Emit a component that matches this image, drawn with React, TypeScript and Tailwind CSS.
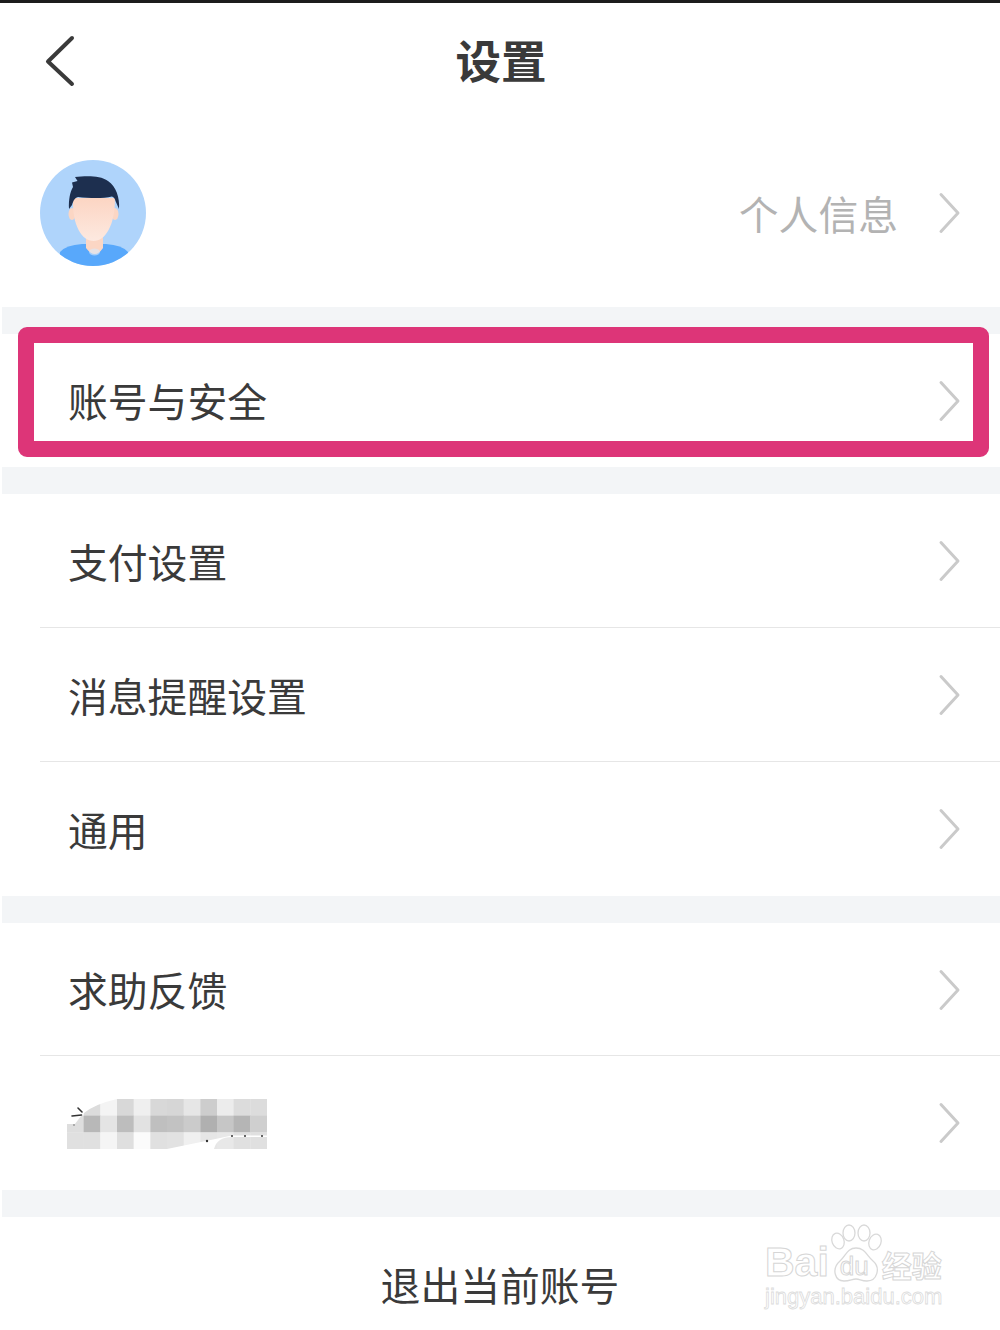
const cjk = "font-['Noto_Sans_CJK_SC','Noto_Sans',sans-serif]";

// ───── icons ─────

function Chevron() {
  return (
    <svg width="24" height="44" viewBox="0 0 24 44" fill="none" className="shrink-0">
      <path d="M4 3.5 L21 22 L4 40.5" stroke="#cacaca" strokeWidth="3" strokeLinecap="round" strokeLinejoin="round" />
    </svg>
  );
}

function BackIcon() {
  return (
    <svg width="32" height="52" viewBox="0 0 32 52" fill="none">
      <path d="M28 3 L4 26.5 L28 49" stroke="#3a3a3a" strokeWidth="4" strokeLinecap="round" strokeLinejoin="round" />
    </svg>
  );
}

function Avatar() {
  return (
    <svg width="106" height="106" viewBox="0 0 106 106" className="shrink-0">
      <defs>
        <clipPath id="avatar-clip">
          <circle cx="53" cy="53" r="53" />
        </clipPath>
        <linearGradient id="face" x1="0" y1="0" x2="0" y2="1">
          <stop offset="0" stopColor="#fcd5c3" />
          <stop offset="1" stopColor="#fde9e0" />
        </linearGradient>
      </defs>
      <g clipPath="url(#avatar-clip)">
        <rect width="106" height="106" fill="#afd4fb" />
        <path d="M19 106 L20 92 Q26 85 42 84 L66 84 Q82 85 88 92 L88 106 Z" fill="#58a8fb" />
        <path d="M46 72 H63 V88 Q55 100 46 88 Z" fill="#fbd6c4" />
        <ellipse cx="54.5" cy="92" rx="5.5" ry="3.5" fill="#d9eafb" opacity="0.6" />
        <ellipse cx="32" cy="54" rx="3.5" ry="6" fill="#fbd6c4" />
        <ellipse cx="75" cy="54" rx="3.5" ry="6" fill="#fbd6c4" />
        <path d="M33 38 C32 66 42 81 53.5 81 C65 81 75 66 75 38 Z" fill="url(#face)" />
        <path d="M29 49 C28.5 40 30 32 33 27 L32 22.5 L37.5 21 L35 17 C45 16 60 15 68 21 C76 26 80 38 79 49 L75.5 41 C75 39 74 37 72 36.5 C62 39 48 38 38 37 C34 38 33 42 32 45 Z" fill="#1d2f4f" />
      </g>
    </svg>
  );
}

// pixelated patch that covers the hidden label
const MOSAIC = [
  ["#ffffff", "#dcdcdc", "#f4f4f4", "#d8d8d8", "#efefef", "#d8d8d8", "#d6d6d6", "#e6e6e6", "#cdcdcd", "#ececec", "#dcdcdc", "#dcdcdc"],
  ["#dedede", "#b8b8b8", "#e4e4e4", "#bdbdbd", "#e2e2e2", "#bfbfbf", "#c2c2c2", "#cbcbcb", "#b0b0b0", "#c6c6c6", "#b5b5b5", "#cfcfcf"],
  ["#e0e0e0", "#e0e0e0", "#f5f5f5", "#dfdfdf", "#fbfbfb", "#e0e0e0", "#e2e2e2", "#f0f0f0", "#e6e6e6", "#e8e8e8", "#e0e0e0", "#e0e0e0"],
];

function Mosaic() {
  const size = 200 / 12;
  return (
    <svg width="200" height="50" viewBox="0 0 200 50" className="shrink-0">
      {MOSAIC.map((row, y) =>
        row.map((fill, x) => (
          <rect key={`${x}-${y}`} x={x * size} y={y * size} width={size + 0.3} height={size + 0.3} fill={fill} />
        )),
      )}
      <path d="M0 0 H50 Q28 5 17 14 Q12 19 8 25 H0 Z" fill="#ffffff" />
      <path d="M100 51 V50 L140 41.7 L165 36.5 H200 V38 H165 Q150 38 147 50 V51 Z" fill="#ffffff" />
      <path d="M11 9 L15 13 M5 17 L14.5 16" stroke="#333" strokeWidth="1.6" fill="none" strokeLinecap="round" />
      <circle cx="7" cy="26" r="0.7" fill="#555" />
      <circle cx="140" cy="42" r="1.2" fill="#333" />
      <circle cx="165" cy="37" r="1" fill="#333" />
      <circle cx="178" cy="37" r="1" fill="#333" />
      <circle cx="195" cy="37" r="1" fill="#333" />
    </svg>
  );
}

function Watermark() {
  const stroked = "text-white [-webkit-text-stroke:1px_#d6d6d6]";
  return (
    <div className="absolute right-[55px] top-[5px] flex w-[180px] flex-col items-start">
      <div className="flex h-[60px] items-end">
        <span className={`font-['Liberation_Sans',sans-serif] text-[41px] leading-[40px] font-bold ${stroked}`}>Bai</span>
        <div className="relative mb-[-2px] h-[60px] w-[54px] shrink-0">
          <svg width="54" height="60" viewBox="0 0 54 60" fill="#ffffff" stroke="#d9d9d9" strokeWidth="1.3" className="absolute inset-0">
            <ellipse cx="9" cy="17" rx="6" ry="8" transform="rotate(-20 9 17)" />
            <ellipse cx="20" cy="9" rx="6" ry="8" />
            <ellipse cx="35" cy="9" rx="6" ry="8" />
            <ellipse cx="46" cy="18" rx="6" ry="8" transform="rotate(20 46 18)" />
            <path d="M27 24 C36 24 38 32 44 37 C52 44 48 57 38 57 C32 57 31 55 27 55 C23 55 21 57 15 57 C6 57 2 45 11 37 C17 32 18 24 27 24 Z" />
          </svg>
          <span className={`absolute left-[11px] top-[30px] font-['Liberation_Sans',sans-serif] text-[26px] leading-[24px] ${stroked}`}>du</span>
        </div>
        <span className={`${cjk} -ml-[1px] text-[30px] leading-[36px] font-bold ${stroked}`}>经验</span>
      </div>
      <span className="mt-[2px] font-['Liberation_Sans',sans-serif] text-[22px] leading-[26px] whitespace-nowrap text-white [-webkit-text-stroke:0.8px_#dcdcdc]">
        jingyan.baidu.com
      </span>
    </div>
  );
}

// ───── rows ─────

function Gap() {
  return <div className="ml-[2px] h-[27px] shrink-0 bg-[#f3f5f7]" />;
}

function Row({ label, height, divider, children }: { label?: string; height: number; divider?: boolean; children?: React.ReactNode }) {
  return (
    <div className="relative flex shrink-0 items-center justify-between pr-[39px] pl-[68px]" style={{ height }}>
      {label ? <span className="pb-[1px] text-[39.8px] leading-[52px] text-[#3a3a3a]">{label}</span> : children}
      <Chevron />
      {divider && <div className="absolute right-0 bottom-0 left-[40px] h-[1px] bg-[#e6e6e6]" />}
    </div>
  );
}

export default function App() {
  return (
    <div className={`flex h-[1330px] w-[1000px] flex-col overflow-hidden border-t-[3px] border-[#1c1c1c] bg-white ${cjk}`}>
      <header className="grid h-[117px] shrink-0 grid-cols-[1fr_auto_1fr] pt-[7px]">
        <div className="pt-[25px] pl-[44px]">
          <BackIcon />
        </div>
        <h1 className="pl-[2px] text-[45.5px] leading-[98px] font-bold text-[#3a3a3a]">设置</h1>
      </header>

      <section className="flex h-[187px] shrink-0 items-center justify-between pr-[39px] pb-[1px] pl-[40px]">
        <Avatar />
        <div className="flex items-center gap-[39px]">
          <span className="text-[39.8px] leading-[52px] text-[#b3b3b3]">个人信息</span>
          <Chevron />
        </div>
      </section>
      <Gap />

      <div className="relative">
        <Row label="账号与安全" height={133} />
        <div className="absolute top-[-7px] left-[18px] h-[130px] w-[971px] rounded-[9px] border-[16px] border-[#dd3578]" />
      </div>
      <Gap />

      <Row label="支付设置" height={134} divider />
      <Row label="消息提醒设置" height={134} divider />
      <Row label="通用" height={134} />
      <Gap />

      <Row label="求助反馈" height={133} divider />
      <Row height={134}>
        <div className="-ml-[1px] pt-[2px]">
          <Mosaic />
        </div>
      </Row>
      <Gap />

      <footer className="relative flex flex-1 items-start justify-center pt-[41px]">
        <span className="text-[39.8px] leading-[52px] text-[#3a3a3a]">退出当前账号</span>
        <Watermark />
      </footer>
    </div>
  );
}
